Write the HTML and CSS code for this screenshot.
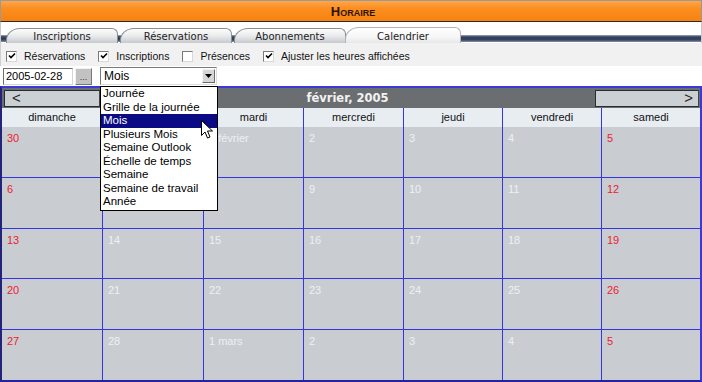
FILE: index.html
```html
<!DOCTYPE html>
<html lang="fr">
<head>
<meta charset="utf-8">
<title>Horaire</title>
<link rel="stylesheet" href="styles.css">
</head>
<body>
<div class="app">
  <div class="titlebar"><span class="title">Horaire</span></div>
  <div class="tabs">
    <div class="tab">Inscriptions</div>
    <div class="tab">Réservations</div>
    <div class="tab">Abonnements</div>
    <div class="tab active">Calendrier</div>
  </div>
  <div class="options">
    <label class="opt"><span class="cb"><svg viewBox="0 0 8 8" width="8" height="8"><path d="M1 3.5 L3 5.5 L7 1.5" fill="none" stroke="#000" stroke-width="1.6"/></svg></span>Réservations</label>
    <label class="opt"><span class="cb"><svg viewBox="0 0 8 8" width="8" height="8"><path d="M1 3.5 L3 5.5 L7 1.5" fill="none" stroke="#000" stroke-width="1.6"/></svg></span>Inscriptions</label>
    <label class="opt"><span class="cb"></span>Présences</label>
    <label class="opt"><span class="cb"><svg viewBox="0 0 8 8" width="8" height="8"><path d="M1 3.5 L3 5.5 L7 1.5" fill="none" stroke="#000" stroke-width="1.6"/></svg></span>Ajuster les heures affichées</label>
  </div>
  <div class="controls">
    <div class="datebox">2005-02-28</div>
    <div class="dots">...</div>
    <div class="select"><span class="selval">Mois</span><span class="arrow"><svg viewBox="0 0 7 4" width="7" height="4"><path d="M0 0 H7 L3.5 4 Z" fill="#000"/></svg></span></div>
  </div>
  <div class="calendar">
    <div class="nav">
      <div class="navbtn">&lt;</div>
      <div class="month">février, 2005</div>
      <div class="navbtn next">&gt;</div>
    </div>
    <div class="days">
      <div>dimanche</div><div>lundi</div><div>mardi</div><div>mercredi</div><div>jeudi</div><div>vendredi</div><div>samedi</div>
    </div>
    <div class="grid">
      <div class="cell we">30</div><div class="cell">31</div><div class="cell">1 février</div><div class="cell">2</div><div class="cell">3</div><div class="cell">4</div><div class="cell we">5</div>
      <div class="cell we">6</div><div class="cell">7</div><div class="cell">8</div><div class="cell">9</div><div class="cell">10</div><div class="cell">11</div><div class="cell we">12</div>
      <div class="cell we">13</div><div class="cell">14</div><div class="cell">15</div><div class="cell">16</div><div class="cell">17</div><div class="cell">18</div><div class="cell we">19</div>
      <div class="cell we">20</div><div class="cell">21</div><div class="cell">22</div><div class="cell">23</div><div class="cell">24</div><div class="cell">25</div><div class="cell we">26</div>
      <div class="cell we">27</div><div class="cell">28</div><div class="cell">1 mars</div><div class="cell">2</div><div class="cell">3</div><div class="cell">4</div><div class="cell we">5</div>
    </div>
  </div>
  <ul class="dropdown">
    <li>Journée</li>
    <li>Grille de la journée</li>
    <li class="sel">Mois</li>
    <li>Plusieurs Mois</li>
    <li>Semaine Outlook</li>
    <li>Échelle de temps</li>
    <li>Semaine</li>
    <li>Semaine de travail</li>
    <li>Année</li>
  </ul>
  <svg class="cursor" viewBox="0 0 12 19" width="12" height="19"><path d="M0.5 0.5 V15.5 L4 12 L6.5 18 L9 17 L6.5 11 H11.5 Z" fill="#fff" stroke="#000" stroke-width="1"/></svg>
</div>
</body>
</html>
```
FILE: styles.css
```css
* { box-sizing: border-box; }
html, body { margin: 0; padding: 0; }
body {
  width: 702px;
  height: 382px;
  overflow: hidden;
  background: #fff;
  font-family: "Liberation Sans", Arial, sans-serif;
  font-size: 11px;
  color: #000;
}
.app {
  position: relative;
  width: 702px;
  height: 382px;
  display: flex;
  flex-direction: column;
}
.titlebar {
  height: 22px;
  border-top: 1px solid #9a9a9a;
  border-left: 1px solid #9a9a9a;
  border-right: 1px solid #9a9a9a;
  border-bottom: 1px solid #2a2a2a;
  background: linear-gradient(#ffa648 0%, #fc8f22 35%, #f6820f 100%);
  display: flex;
  align-items: center;
  justify-content: center;
}
.title {
  font-variant: small-caps;
  font-weight: bold;
  font-size: 13px;
  color: #2e1400;
  padding-left: 4px;
}
.tabs {
  height: 21px;
  display: flex;
  align-items: flex-end;
  padding-left: 5px;
  gap: 2px;
  background-color: #fff;
  background-image: linear-gradient(#b9c0cc 0, #56627c 1px, #2c3956 3px, #3b4866 5px, #8c94a4 7px);
  background-repeat: no-repeat;
  background-position: 0 13px;
  background-size: 100% 7px;
  border-left: 1px solid #c8c8c8;
  border-right: 1px solid #c8c8c8;
}
.tab {
  width: 112px;
  height: 15px;
  border: 1px solid #8a8e94;
  border-bottom: none;
  border-radius: 14px 6px 0 0 / 12px 6px 0 0;
  background: linear-gradient(#fdfdfd, #e9eaec 50%, #c6c9cd);
  font-family: "DejaVu Sans", Verdana, sans-serif;
  font-size: 10px;
  color: #222;
  display: flex;
  align-items: center;
  justify-content: center;
  padding-top: 1px;
}
.tab.active {
  width: 116px;
  margin-left: -3px;
  height: 16px;
  background: linear-gradient(#ffffff, #f6f6f6 60%, #e6e7e9);
  border-color: #b0b4ba;
}
.options {
  height: 23px;
  background: #f1f1f1;
  display: flex;
  align-items: center;
  padding-left: 5px;
  gap: 13px;
  border-left: 1px solid #d0d0d0;
}
.opt {
  display: flex;
  align-items: center;
  gap: 7px;
  color: #111;
  font-size: 10.5px;
  padding-top: 3px;
}
.cb {
  width: 11px;
  height: 11px;
  background: #fff;
  border-top: 1px solid #7a7a7a;
  border-left: 1px solid #7a7a7a;
  border-right: 1px solid #d8d8d8;
  border-bottom: 1px solid #d8d8d8;
  display: flex;
  align-items: center;
  justify-content: center;
}
.cb svg { display: block; }
.controls {
  height: 20px;
  display: flex;
  align-items: center;
  padding-left: 3px;
}
.datebox {
  width: 70px;
  height: 17px;
  border-top: 1px solid #6e6e6e;
  border-left: 1px solid #6e6e6e;
  border-right: 1px solid #d4d4d4;
  border-bottom: 1px solid #d4d4d4;
  padding: 1px 2px;
  line-height: 13px;
}
.dots {
  width: 17px;
  height: 17px;
  margin-left: 2px;
  background: #c2c2c2;
  border: 1px solid #f2f2f2;
  border-right-color: #777;
  border-bottom-color: #777;
  color: #333;
  font-size: 9px;
  text-align: center;
  line-height: 17px;
}
.select {
  width: 117px;
  height: 18px;
  margin-left: 8px;
  border: 1px solid #7a7a7a;
  border-right-color: #dcdcdc;
  border-bottom-color: #dcdcdc;
  display: flex;
  align-items: center;
  justify-content: space-between;
  padding-left: 3px;
  padding-right: 1px;
  font-size: 12px;
}
.arrow {
  width: 13px;
  height: 14px;
  background: #d6d6d6;
  border: 1px solid #f4f4f4;
  border-right-color: #6a6a6a;
  border-bottom-color: #6a6a6a;
  display: flex;
  align-items: center;
  justify-content: center;
}
.arrow svg { display: block; }
.calendar {
  flex: 1;
  border-top: 2px solid #3a3ad8;
  border-left: 2px solid #23237a;
  border-right: 2px solid #3a3ad8;
  border-bottom: 2px solid #2424a0;
  display: flex;
  flex-direction: column;
  background: #3434e8;
}
.nav {
  height: 20px;
  background: #6b6e71;
  display: flex;
  align-items: center;
  justify-content: space-between;
  padding: 0 1px 0 2px;
}
.navbtn {
  width: 96px;
  height: 17px;
  background: #cbd0d4;
  border: 1px solid #2b2b2b;
  border-right-color: #444;
  font-size: 15px;
  line-height: 14px;
  padding-left: 7px;
  color: #222;
}
.navbtn.next {
  width: 104px;
  text-align: right;
  padding-right: 5px;
}
.month {
  font-family: "DejaVu Sans", Verdana, sans-serif;
  font-weight: bold;
  font-size: 11.5px;
  color: #f2f2f2;
}
.days {
  height: 19px;
  display: grid;
  grid-template-columns: 100px 100px 99px 99px 98px 98px 1fr;
  column-gap: 1px;
  background: #3434e8;
}
.days div {
  background: #e8edf2;
  text-align: center;
  line-height: 19px;
  color: #111;
}
.grid {
  flex: 1;
  display: grid;
  grid-template-columns: 100px 100px 99px 99px 98px 98px 1fr;
  grid-template-rows: repeat(5, 1fr);
  gap: 1px;
  background: #3434e8;
}
.cell {
  background: #c9cdd1;
  color: #eef0f2;
  padding: 5px 5px 0;
  line-height: 13px;
}
.cell.we { color: #ee2030; }
.dropdown {
  position: absolute;
  left: 100px;
  top: 86px;
  width: 118px;
  margin: 0;
  padding: 0 0 1px;
  list-style: none;
  background: #fff;
  border: 1px solid #000;
  font-size: 11.5px;
}
.dropdown li {
  height: 13.5px;
  line-height: 13.5px;
  padding-left: 2px;
  color: #000;
}
.dropdown li.sel {
  background: #0a0a84;
  color: #fff;
}
.cursor {
  position: absolute;
  left: 201px;
  top: 120px;
}
```
